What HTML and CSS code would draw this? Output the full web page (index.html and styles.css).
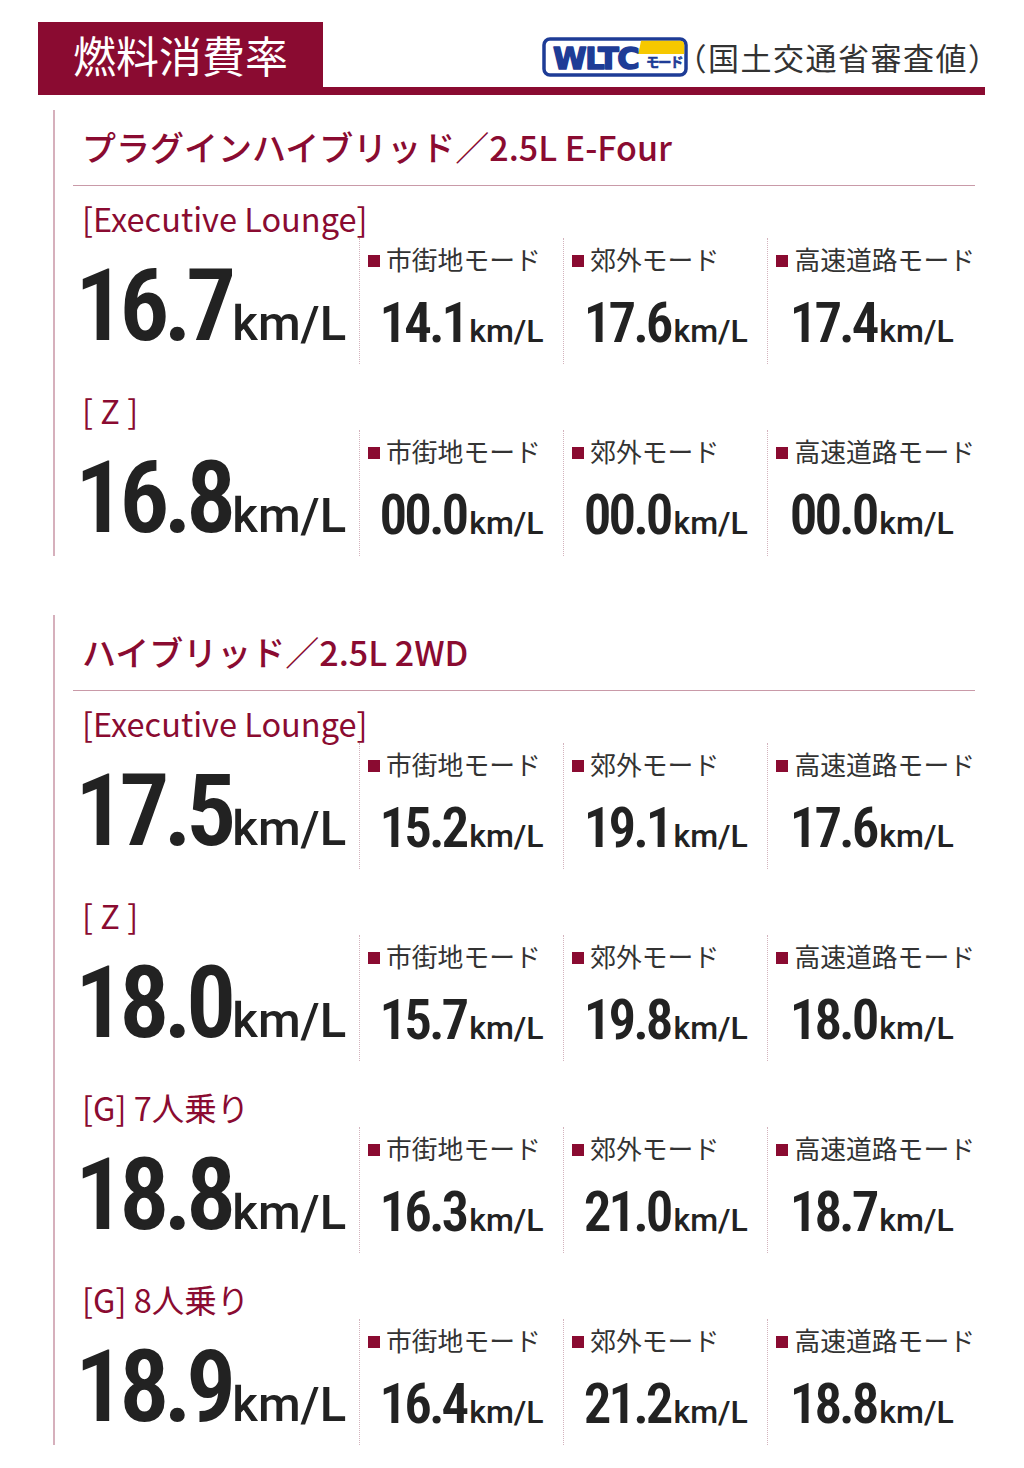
FILE: index.html
```html
<!DOCTYPE html>
<html lang="ja">
<head>
<meta charset="utf-8">
<title>燃料消費率</title>
<link rel="stylesheet" href="styles.css">
</head>
<body>
<div class="page">
  <header class="head">
    <h1 class="title">燃料消費率</h1>
    <div class="std">
      <svg class="wltc" viewBox="0 0 146 40" width="146" height="40" aria-label="WLTCモード">
        <rect x="2" y="2" width="142" height="36" rx="6" ry="6" fill="#ffffff" stroke="#1e3c96" stroke-width="3.5"/>
        <path d="M99 3.8 H138 Q142.2 3.8 142.2 8 V17 H96 Q98 10 99 3.8 Z" fill="#f6c800"/>
        <text x="11" y="31.5" class="wltc-main">WLTC</text>
        <text x="104" y="30" class="wltc-sub">モード</text>
      </svg>
      <span class="std-text">（国土交通省審査値）</span>
    </div>
  </header>

  <section class="grp">
    <h2 class="grp-title">プラグインハイブリッド／2.5L E-Four</h2>
    <div class="grades">
      <div class="grade">
        <div class="grade-name">[Executive Lounge]</div>
        <div class="row">
          <div class="total"><span class="num">16.7</span><span class="unit">km/L</span></div>
          <div class="mode"><div class="mode-name"><i class="sq"></i>市街地モード</div><div class="mode-val"><span class="num">14.1</span><span class="unit">km/L</span></div></div>
          <div class="mode"><div class="mode-name"><i class="sq"></i>郊外モード</div><div class="mode-val"><span class="num">17.6</span><span class="unit">km/L</span></div></div>
          <div class="mode"><div class="mode-name"><i class="sq"></i>高速道路モード</div><div class="mode-val"><span class="num">17.4</span><span class="unit">km/L</span></div></div>
        </div>
      </div>
      <div class="grade">
        <div class="grade-name">[ Z ]</div>
        <div class="row">
          <div class="total"><span class="num">16.8</span><span class="unit">km/L</span></div>
          <div class="mode"><div class="mode-name"><i class="sq"></i>市街地モード</div><div class="mode-val"><span class="num">00.0</span><span class="unit">km/L</span></div></div>
          <div class="mode"><div class="mode-name"><i class="sq"></i>郊外モード</div><div class="mode-val"><span class="num">00.0</span><span class="unit">km/L</span></div></div>
          <div class="mode"><div class="mode-name"><i class="sq"></i>高速道路モード</div><div class="mode-val"><span class="num">00.0</span><span class="unit">km/L</span></div></div>
        </div>
      </div>
    </div>
  </section>

  <section class="grp">
    <h2 class="grp-title">ハイブリッド／2.5L 2WD</h2>
    <div class="grades">
      <div class="grade">
        <div class="grade-name">[Executive Lounge]</div>
        <div class="row">
          <div class="total"><span class="num">17.5</span><span class="unit">km/L</span></div>
          <div class="mode"><div class="mode-name"><i class="sq"></i>市街地モード</div><div class="mode-val"><span class="num">15.2</span><span class="unit">km/L</span></div></div>
          <div class="mode"><div class="mode-name"><i class="sq"></i>郊外モード</div><div class="mode-val"><span class="num">19.1</span><span class="unit">km/L</span></div></div>
          <div class="mode"><div class="mode-name"><i class="sq"></i>高速道路モード</div><div class="mode-val"><span class="num">17.6</span><span class="unit">km/L</span></div></div>
        </div>
      </div>
      <div class="grade">
        <div class="grade-name">[ Z ]</div>
        <div class="row">
          <div class="total"><span class="num">18.0</span><span class="unit">km/L</span></div>
          <div class="mode"><div class="mode-name"><i class="sq"></i>市街地モード</div><div class="mode-val"><span class="num">15.7</span><span class="unit">km/L</span></div></div>
          <div class="mode"><div class="mode-name"><i class="sq"></i>郊外モード</div><div class="mode-val"><span class="num">19.8</span><span class="unit">km/L</span></div></div>
          <div class="mode"><div class="mode-name"><i class="sq"></i>高速道路モード</div><div class="mode-val"><span class="num">18.0</span><span class="unit">km/L</span></div></div>
        </div>
      </div>
      <div class="grade">
        <div class="grade-name">[G] 7人乗り</div>
        <div class="row">
          <div class="total"><span class="num">18.8</span><span class="unit">km/L</span></div>
          <div class="mode"><div class="mode-name"><i class="sq"></i>市街地モード</div><div class="mode-val"><span class="num">16.3</span><span class="unit">km/L</span></div></div>
          <div class="mode"><div class="mode-name"><i class="sq"></i>郊外モード</div><div class="mode-val"><span class="num">21.0</span><span class="unit">km/L</span></div></div>
          <div class="mode"><div class="mode-name"><i class="sq"></i>高速道路モード</div><div class="mode-val"><span class="num">18.7</span><span class="unit">km/L</span></div></div>
        </div>
      </div>
      <div class="grade">
        <div class="grade-name">[G] 8人乗り</div>
        <div class="row">
          <div class="total"><span class="num">18.9</span><span class="unit">km/L</span></div>
          <div class="mode"><div class="mode-name"><i class="sq"></i>市街地モード</div><div class="mode-val"><span class="num">16.4</span><span class="unit">km/L</span></div></div>
          <div class="mode"><div class="mode-name"><i class="sq"></i>郊外モード</div><div class="mode-val"><span class="num">21.2</span><span class="unit">km/L</span></div></div>
          <div class="mode"><div class="mode-name"><i class="sq"></i>高速道路モード</div><div class="mode-val"><span class="num">18.8</span><span class="unit">km/L</span></div></div>
        </div>
      </div>
    </div>
  </section>
</div>
</body>
</html>
```
FILE: styles.css
```css
html, body {
  margin: 0;
  padding: 0;
  background: #ffffff;
}
body {
  font-family: "Noto Sans CJK JP", "Noto Sans", sans-serif;
  color: #333333;
}
.page {
  width: 947px;
  margin: 22px 0 0 38px;
}

/* header */
.head {
  display: flex;
  justify-content: space-between;
  height: 65px;
  border-bottom: 8px solid #8a0b31;
}
.title {
  margin: 0;
  padding: 0 35px;
  background: #8a0b31;
  color: #ffffff;
  font-size: 43px;
  font-weight: 400;
  line-height: 65px;
  white-space: nowrap;
}
.std {
  display: flex;
  align-items: center;
  gap: 3px;
  padding: 4px 0 0 0;
}
.wltc {
  display: block;
  flex: none;
}
.wltc-main {
  font-family: "DejaVu Sans", sans-serif;
  font-weight: 700;
  font-size: 30.5px;
  letter-spacing: -1.5px;
  fill: #1e3c96;
  stroke: #1e3c96;
  stroke-width: 1.6px;
  stroke-linejoin: round;
}
.wltc-sub {
  font-family: "Noto Sans CJK JP", sans-serif;
  font-weight: 700;
  font-size: 13.5px;
  letter-spacing: -1.5px;
  fill: #1e3c96;
  stroke: #1e3c96;
  stroke-width: 0.5px;
}
.std-text {
  font-size: 31px;
  line-height: 1;
  letter-spacing: 1.5px;
  font-feature-settings: "halt";
  color: #333333;
  white-space: nowrap;
}

/* groups */
.grp {
  width: 902px;
  margin: 15px 0 0 15px;
  padding: 0 0 0 18px;
  border-left: 2px solid #d6b0bc;
}
.grp + .grp {
  margin-top: 59px;
}
.grp-title {
  margin: 0;
  padding: 12px 0 13px 9px;
  font-size: 34px;
  font-weight: 500;
  line-height: 50px;
  color: #8a0b31;
  border-bottom: 1px solid #c99aa8;
  white-space: nowrap;
}
.grades {
  display: flex;
  flex-direction: column;
  gap: 26px;
  padding-top: 12px;
}
.grade-name {
  padding-left: 9px;
  font-size: 32.5px;
  line-height: 40px;
  color: #8a0b31;
  white-space: nowrap;
}
.row {
  display: grid;
  grid-template-columns: 286px repeat(3, 1fr);
  height: 126px;
}
.total {
  padding: 18px 0 0 2px;
  font-family: "Roboto Condensed", Roboto, sans-serif;
  font-weight: 600;
  font-size: 100px;
  line-height: 100px;
  letter-spacing: -6px;
  color: #222222;
  white-space: nowrap;
}
.total .unit {
  font-size: 49px;
  margin-left: 2px;
}
.unit {
  font-family: Roboto, sans-serif;
  font-weight: 500;
  line-height: 1;
  letter-spacing: 0;
}
.mode {
  border-left: 1px dotted #d3b3bd;
}
.mode-name {
  padding: 4px 0 0 8px;
  font-size: 25.8px;
  line-height: 34px;
  color: #333333;
  white-space: nowrap;
}
.sq {
  display: inline-block;
  width: 12px;
  height: 12px;
  margin-right: 6px;
  background: #8a0b31;
  vertical-align: 3px;
}
.mode-val {
  margin-top: 17px;
  text-align: center;
  font-family: "Roboto Condensed", Roboto, sans-serif;
  font-weight: 600;
  font-size: 55px;
  line-height: 60px;
  letter-spacing: -3px;
  color: #222222;
  white-space: nowrap;
}
.mode-val .unit {
  font-size: 32px;
  margin-left: 3px;
}
```
